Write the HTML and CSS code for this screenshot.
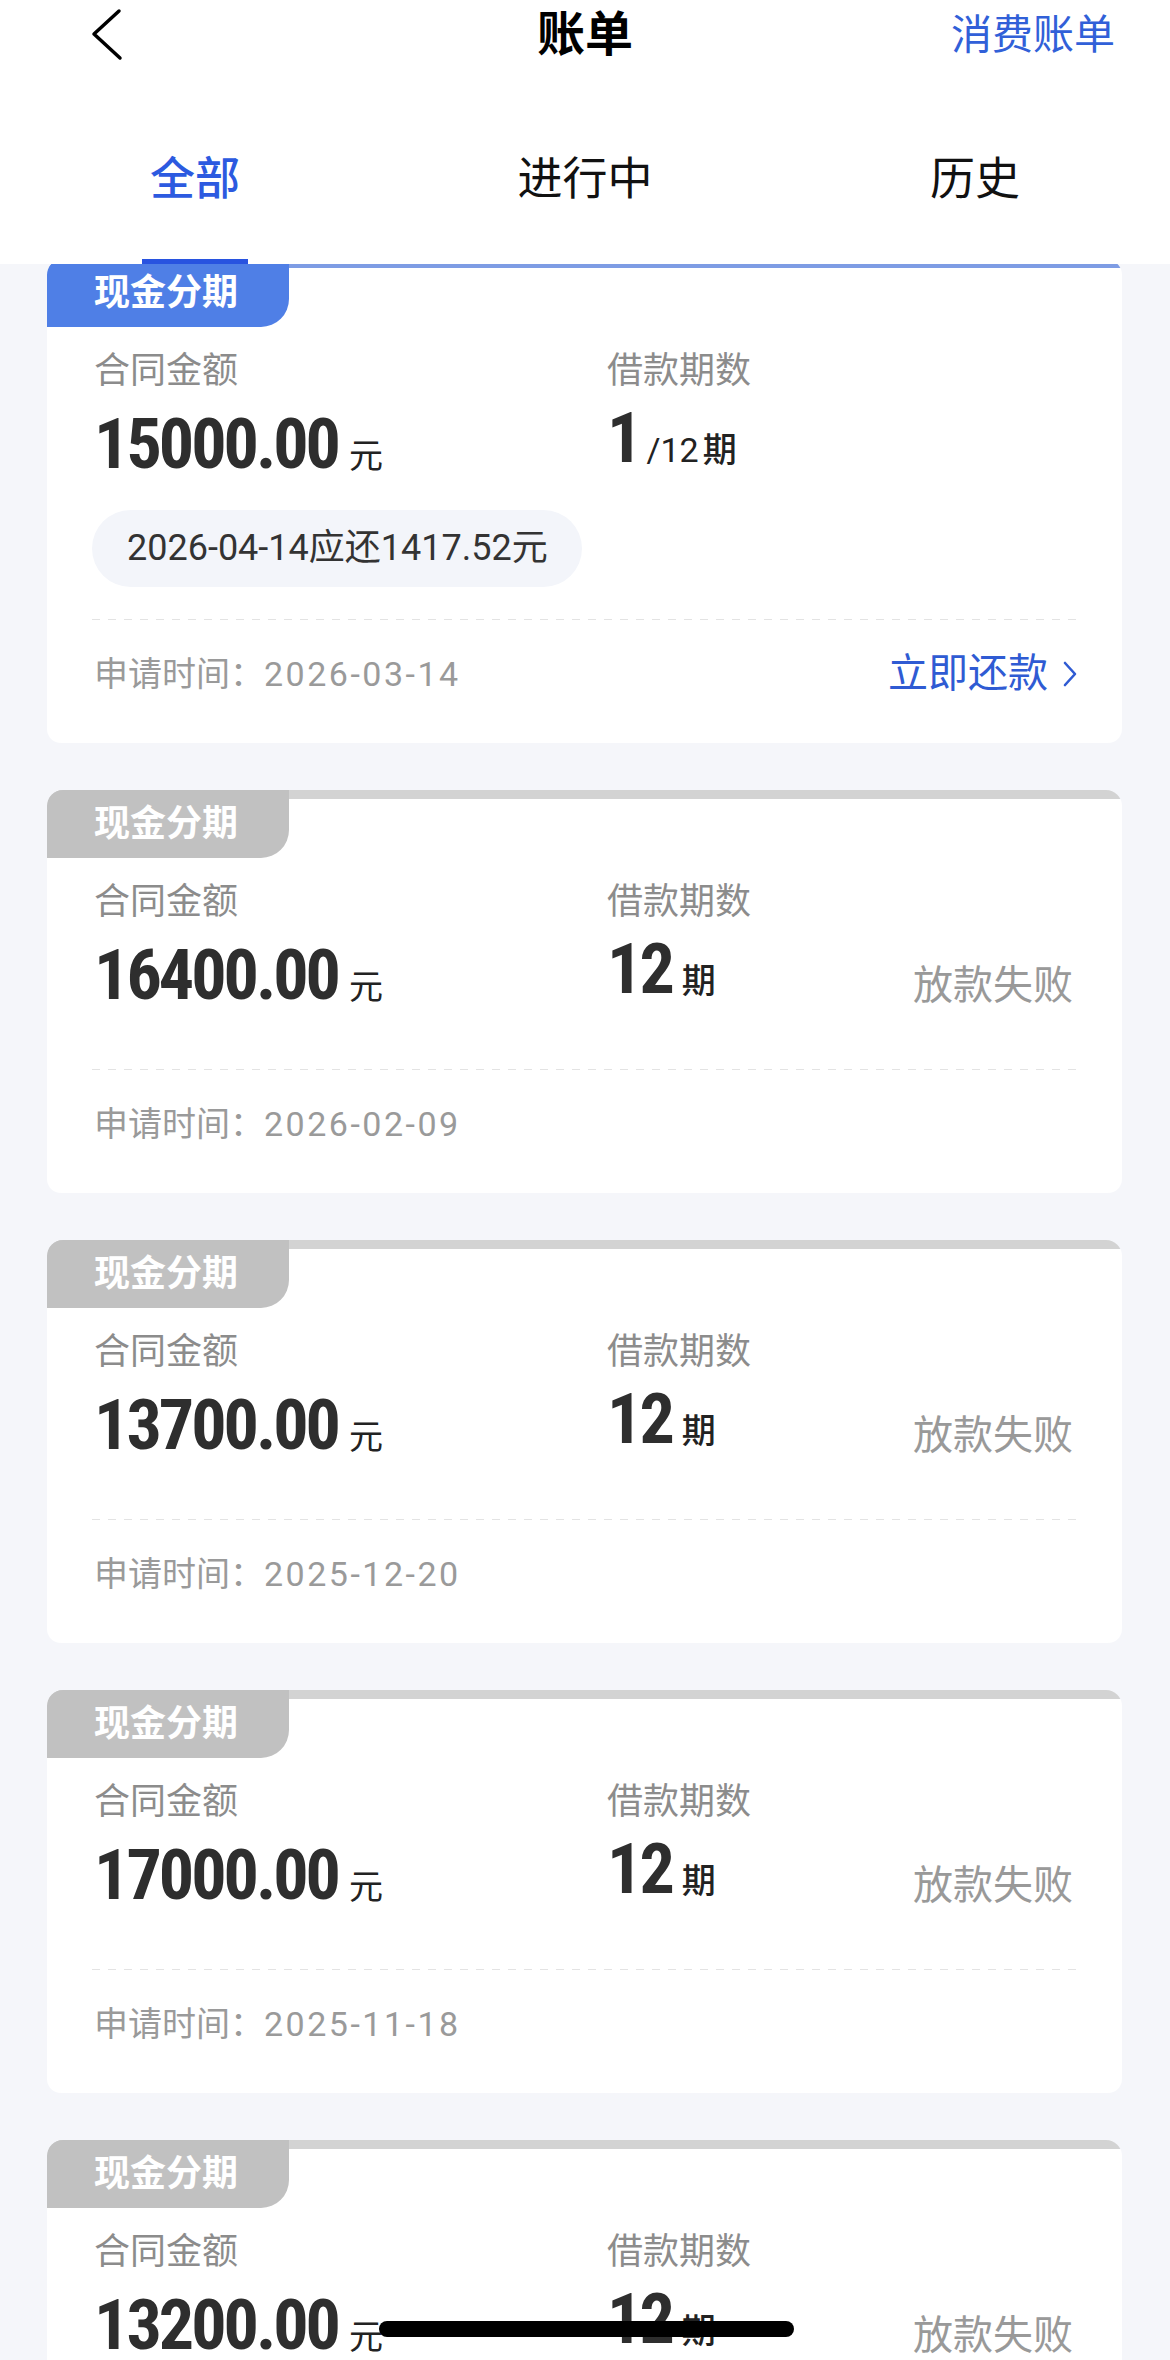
FILE: index.html
```html
<!DOCTYPE html>
<html lang="zh-CN">
<head>
    <meta charset="UTF-8">
    <meta name="viewport" content="width=device-width, initial-scale=1.0">
    <title>账单</title>
    <link rel="stylesheet" href="styles.css">
</head>
<body>
    <div class="screen">
        <header class="top">
            <div class="nav">
                <a class="back">
                    <svg width="32" height="54" viewBox="0 0 32 54"><polyline points="28,3 3,26 29,50" fill="none" stroke="#000" stroke-width="3.5" stroke-linecap="round" stroke-linejoin="round"/></svg>
                </a>
                <h1 class="title">账单</h1>
                <a class="nav-link">消费账单</a>
            </div>
            <div class="tabs">
                <div class="tab active"><span>全部</span></div>
                <div class="tab"><span>进行中</span></div>
                <div class="tab"><span>历史</span></div>
            </div>
        </header>

        <div class="list">
            <div class="card current">
                <div class="badge">现金分期</div>
                <div class="figures">
                    <div class="label">合同金额</div>
                    <div class="label label-term">借款期数</div>
                    <div class="amount"><span class="num">15000.00</span><span class="unit">元</span></div>
                    <div class="term"><span class="num">1</span><span class="total">/12</span><span class="unit">期</span></div>
                </div>
                <div class="due">2026-04-14应还1417.52元</div>
                <div class="foot">
                    <span class="date">申请时间：<span class="ymd">2026-03-14</span></span>
                    <a class="pay">立即还款<svg width="16" height="26" viewBox="0 0 16 26"><polyline points="3,2 13,13 3,24" fill="none" stroke="#2f5bd3" stroke-width="2.6" stroke-linecap="round" stroke-linejoin="round"/></svg></a>
                </div>
            </div>

            <div class="card">
                <div class="badge">现金分期</div>
                <div class="figures">
                    <div class="label">合同金额</div>
                    <div class="label label-term">借款期数</div>
                    <div class="amount"><span class="num">16400.00</span><span class="unit">元</span></div>
                    <div class="term"><span class="num">12</span><span class="unit">期</span></div>
                    <div class="status">放款失败</div>
                </div>
                <div class="foot">
                    <span class="date">申请时间：<span class="ymd">2026-02-09</span></span>
                </div>
            </div>

            <div class="card">
                <div class="badge">现金分期</div>
                <div class="figures">
                    <div class="label">合同金额</div>
                    <div class="label label-term">借款期数</div>
                    <div class="amount"><span class="num">13700.00</span><span class="unit">元</span></div>
                    <div class="term"><span class="num">12</span><span class="unit">期</span></div>
                    <div class="status">放款失败</div>
                </div>
                <div class="foot">
                    <span class="date">申请时间：<span class="ymd">2025-12-20</span></span>
                </div>
            </div>

            <div class="card">
                <div class="badge">现金分期</div>
                <div class="figures">
                    <div class="label">合同金额</div>
                    <div class="label label-term">借款期数</div>
                    <div class="amount"><span class="num">17000.00</span><span class="unit">元</span></div>
                    <div class="term"><span class="num">12</span><span class="unit">期</span></div>
                    <div class="status">放款失败</div>
                </div>
                <div class="foot">
                    <span class="date">申请时间：<span class="ymd">2025-11-18</span></span>
                </div>
            </div>

            <div class="card">
                <div class="badge">现金分期</div>
                <div class="figures">
                    <div class="label">合同金额</div>
                    <div class="label label-term">借款期数</div>
                    <div class="amount"><span class="num">13200.00</span><span class="unit">元</span></div>
                    <div class="term"><span class="num">12</span><span class="unit">期</span></div>
                    <div class="status">放款失败</div>
                </div>
                <div class="foot">
                    <span class="date">申请时间：<span class="ymd">2025-10-26</span></span>
                </div>
            </div>
        </div>

        <div class="home-bar"></div>
    </div>
</body>
</html>
```

FILE: styles.css
```css
body {
    margin: 0;
    font-family: Roboto, "Noto Sans CJK SC", sans-serif;
    background-color: #f5f6fa;
    color: #222;
}
.screen {
    position: relative;
    height: 2360px;
    overflow: hidden;
}

/* header */
.top {
    position: relative;
    z-index: 1;
    background: #fff;
}
.nav {
    display: grid;
    grid-template-columns: 1fr auto 1fr;
    align-items: center;
    height: 70px;
}
.back {
    display: flex;
    padding-left: 91px;
}
.title {
    margin: 0;
    font-size: 48px;
    font-weight: bold;
    color: #000;
    line-height: 70px;
}
.nav-link {
    justify-self: end;
    padding-right: 55px;
    font-size: 41px;
    color: #3160d8;
    line-height: 70px;
}
.tabs {
    display: flex;
}
.tab {
    flex: 1;
    display: flex;
    flex-direction: column;
    align-items: center;
    padding-top: 80px;
    font-size: 45px;
    color: #111;
}
.tab span {
    line-height: 60px;
}
.tab::after {
    content: "";
    width: 106px;
    height: 5px;
    margin-top: 49px;
}
.tab.active {
    color: #2c5ae0;
    font-weight: 500;
}
.tab.active::after {
    background: #2853e0;
}

/* list */
.list {
    display: flex;
    flex-direction: column;
    gap: 47px;
    padding: 0 48px 0 47px;
}
.card {
    background: linear-gradient(#d3d3d3 0 9px, #fff 9px);
    border-radius: 16px 16px 14px 14px;
    padding-bottom: 47px;
}
.card:first-child {
    margin-top: -5px;
}
.card.current {
    background: linear-gradient(#7e9ce4 0 9px, #fff 9px);
}
.badge {
    width: 195px;
    height: 68px;
    padding-left: 47px;
    line-height: 68px;
    font-size: 36px;
    font-weight: bold;
    color: #fff;
    background: #c1c1c1;
    border-radius: 16px 0 28px 0;
}
.current .badge {
    background: #4f7fe6;
}

.figures {
    display: grid;
    grid-template-columns: 513px 1fr auto;
    grid-template-rows: 44px 78px;
    row-gap: 12px;
    align-items: start;
    margin-top: 22px;
    padding: 0 49px 23px 47px;
}
.label {
    grid-row: 1;
    font-size: 36px;
    line-height: 44px;
    color: #8c8c8c;
}
.label-term {
    grid-column: 2;
}
.num {
    font-family: "Liberation Sans Narrow", "Roboto Condensed", "DejaVu Sans Condensed", sans-serif;
    font-size: 70px;
    font-weight: bold;
    letter-spacing: -3px;
    color: #2e2e2e;
}
.amount {
    grid-row: 2;
    grid-column: 1;
    line-height: 78px;
}
.term {
    grid-row: 2;
    grid-column: 2;
    line-height: 66px;
}
.unit {
    margin-left: 11px;
    font-size: 34px;
    color: #222;
}
.term .unit {
    margin-left: 10px;
    font-weight: 500;
}
.term .total {
    margin-left: 7px;
    font-size: 34px;
    color: #222;
}
.term .total + .unit {
    margin-left: 4px;
}
.status {
    grid-row: 2;
    grid-column: 3;
    align-self: end;
    margin-bottom: 8px;
    font-size: 40px;
    line-height: 40px;
    color: #999;
}

.due {
    width: fit-content;
    margin: 4px 0 0 45px;
    padding: 0 34px 0 35px;
    height: 77px;
    line-height: 77px;
    border-radius: 39px;
    background: #f3f5fa;
    font-size: 36px;
    color: #333;
}
.figures + .foot,
.due + .foot {
    margin-top: 32px;
}
.foot {
    display: flex;
    justify-content: space-between;
    align-items: center;
    margin: 0 44px 0 45px;
    padding-top: 33px;
    background: linear-gradient(to right, #e3e3e3 50%, transparent 50%) top left / 16px 1px repeat-x;
    line-height: 44px;
}
.date {
    padding-left: 2px;
    font-size: 34px;
    color: #9a9a9a;
}
.ymd {
    letter-spacing: 2.5px;
}
.pay {
    display: flex;
    align-items: center;
    gap: 14px;
    font-size: 40px;
    color: #2f5bd3;
}

.home-bar {
    position: absolute;
    left: 379px;
    bottom: 23px;
    width: 415px;
    height: 16px;
    border-radius: 8px;
    background: #000;
}
```
